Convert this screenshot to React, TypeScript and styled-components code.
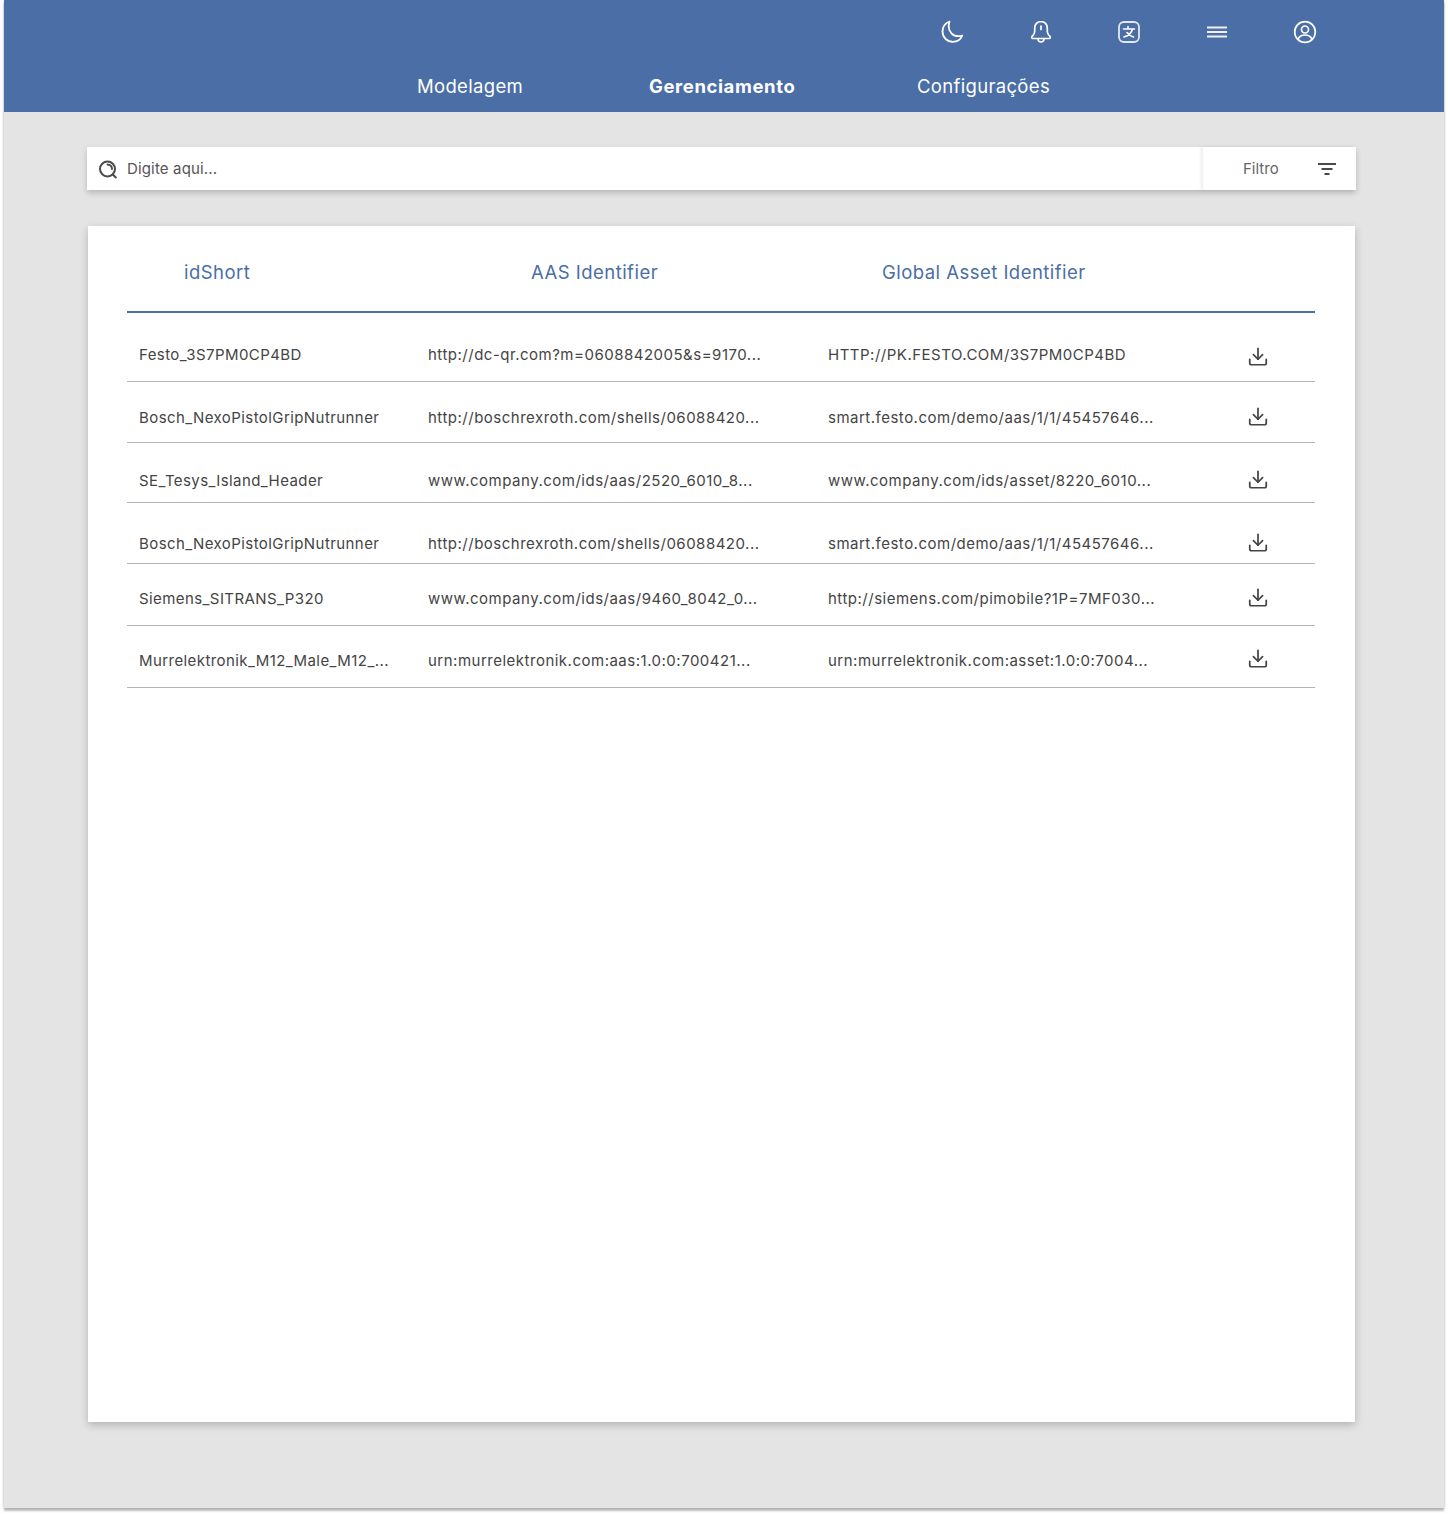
import React from "react";
import styled, { createGlobalStyle } from "styled-components";
import { Download } from "lucide-react";

const BLUE = "#4a6ea5";
const FONT = `Inter, "Noto Sans", sans-serif`;

const GlobalStyle = createGlobalStyle`
  html, body {
    margin: 0;
    background: #fff;
  }
  body {
    min-height: 1516px;
    font-family: ${FONT};
  }
`;

const Frame = styled.div`
  width: 1440px;
  height: 1508px;
  margin-left: 4px;
  background: #e4e4e4;
  box-shadow: 0 3px 2px rgba(0, 0, 0, 0.25), 0 0 3px rgba(0, 0, 0, 0.18);
  display: flex;
  flex-direction: column;
`;

const Header = styled.header`
  height: 112px;
  flex: none;
  background: ${BLUE};
  display: flex;
  flex-direction: column;
`;

const IconBar = styled.div`
  display: flex;
  gap: 64px;
  padding: 20px 0 0 937px;
  color: #fff;
`;

const IconSlot = styled.span`
  width: 24px;
  height: 24px;
  display: flex;
  align-items: center;
  justify-content: center;
`;

const Nav = styled.nav`
  display: flex;
  padding: 29px 0 0 413px;
`;

const NavItem = styled.a<{ $active?: boolean; $width: number }>`
  width: ${(p) => p.$width}px;
  color: #fff;
  font-size: 18.5px;
  line-height: 26px;
  letter-spacing: ${(p) => (p.$active ? 0.6 : 0.33)}px;
  font-weight: ${(p) => (p.$active ? 700 : 400)};
`;

const Content = styled.main`
  display: flex;
  flex-direction: column;
  padding: 35px 88px 0 83px;
`;

const SearchBar = styled.div`
  height: 43px;
  background: #fff;
  box-shadow: 0 3px 6px rgba(0, 0, 0, 0.2);
  display: flex;
  align-items: center;
`;

const SearchField = styled.div`
  flex: 1;
  height: 100%;
  display: flex;
  align-items: center;
  gap: 9px;
  padding-left: 11px;
  box-sizing: border-box;
  font-size: 15px;
  letter-spacing: 0.15px;
  color: #555;
`;

const FieldIcon = styled.span`
  display: flex;
  margin-top: 1px;
`;

const FilterBox = styled.div`
  width: 153px;
  height: 100%;
  display: flex;
  align-items: center;
  padding-left: 40px;
  box-sizing: border-box;
  gap: 38px;
  font-size: 15px;
  color: #666;
  box-shadow: -2px 0 3px rgba(0, 0, 0, 0.08);
`;

const Card = styled.section`
  height: 1196px;
  margin: 36px 1px 0;
  background: #fff;
  box-shadow: 0 3px 8px rgba(0, 0, 0, 0.22);
  padding: 0 40px 0 39px;
  box-sizing: border-box;
`;

const HeadRow = styled.div`
  height: 87px;
  display: flex;
  align-items: center;
  padding-top: 7px;
  box-sizing: border-box;
  border-bottom: 2px solid ${BLUE};
  color: ${BLUE};
  font-size: 18.5px;
  letter-spacing: 0.47px;
`;

const HeadCell = styled.div<{ $width: number; $indent: number }>`
  width: ${(p) => p.$width}px;
  padding-left: ${(p) => p.$indent}px;
  box-sizing: border-box;
`;

const Row = styled.div<{ $height: number; $top: number }>`
  height: ${(p) => p.$height}px;
  box-sizing: border-box;
  padding: ${(p) => p.$top}px 0 0 12px;
  border-bottom: 1px solid #b3b3b3;
  display: grid;
  grid-template-columns: 289px 400px 419px 22px;
  align-items: start;
  color: #444;
  font-size: 15px;
  line-height: 20px;
`;

const IdCell = styled.span`
  letter-spacing: 0.42px;
`;

const UrlCell = styled.span`
  letter-spacing: 0.5px;
`;

const DownloadButton = styled.span<{ $shift: number }>`
  display: flex;
  color: #444;
  margin-top: ${(p) => p.$shift}px;
`;

const SearchIcon = () => (
  <svg width="20" height="20" viewBox="0 0 20 20" fill="none" stroke="#4a4a4a" strokeWidth="2">
    <circle cx="9.500" cy="10" r="7.500" />
    <path d="M9.500 5.500a4.500 4.500 0 0 1 4.500 4.500M14.800 15.500l3 3" strokeLinecap="round" />
  </svg>
);

const FilterIcon = () => (
  <svg width="20" height="14" viewBox="0 0 20 14" fill="none" stroke="#4a4a4a" strokeWidth="2">
    <path d="M1 2h18M4.500 7h11M7.500 12h5" />
  </svg>
);

const MoonIcon = () => (
  <svg width="24" height="24" viewBox="0 0 24 24" fill="none" stroke="currentColor" strokeWidth="1.800" strokeLinejoin="round">
    <path d="M8.500 1.500C4 3.300 1.500 7.200 1.500 11.500c0 5.800 4.700 10.300 10.300 10.300 4.200 0 8-2.500 9.500-6.300-1.200.5-2.500.7-3.800.7-5.700 0-9.800-4.500-9.800-10 0-1.600.3-3.200.8-4.700z" />
  </svg>
);

const BellIcon = () => (
  <svg width="24" height="24" viewBox="0 0 24 24" fill="none" stroke="currentColor" strokeWidth="1.700" strokeLinecap="round" strokeLinejoin="round">
    <path d="M12 1.500c-3.800 0-6.300 3-6.300 6.500v3.500c0 2-1 3.500-2.700 5-.7.700-.3 2 .8 2h16.400c1.100 0 1.500-1.300.8-2-1.700-1.500-2.700-3-2.700-5V8c0-3.500-2.500-6.500-6.300-6.500z" />
    <path d="M9 19c.2 1.900 1.400 3 3 3s2.800-1.100 3-3M12 6v3.500" />
  </svg>
);

const TranslateIcon = () => (
  <svg width="24" height="24" viewBox="0 0 24 24" fill="none" stroke="currentColor" strokeWidth="1.600" strokeLinecap="round" strokeLinejoin="round">
    <rect x="2" y="2" width="20" height="20" rx="5" stroke="#e4e8f0" strokeWidth="1.800" />
    <path d="M6.500 9h11M11 6.500V9M15.500 9c-.8 3.500-3.500 6.500-8.500 8M10 12.500c1.500 2 3.500 3.500 6.500 4.500" />
  </svg>
);

const MenuIcon = () => (
  <svg width="24" height="24" viewBox="0 0 24 24" fill="none" stroke="#eef0f5" strokeWidth="1.800">
    <path d="M2 7.500h20M2 12h20M2 16.500h20" />
  </svg>
);

const UserIcon = () => (
  <svg width="24" height="24" viewBox="0 0 24 24" fill="none" stroke="currentColor" strokeWidth="1.700">
    <circle cx="12" cy="12" r="10.300" />
    <circle cx="12" cy="9.500" r="3.500" />
    <path d="M5 19.500c1-3 3.500-4.500 7-4.500s6 1.500 7 4.500" />
  </svg>
);

const rows = [
  { id: "Festo_3S7PM0CP4BD", aas: "http://dc-qr.com?m=0608842005&s=9170...", asset: "HTTP://PK.FESTO.COM/3S7PM0CP4BD", height: 69, top: 32, shift: -1 },
  { id: "Bosch_NexoPistolGripNutrunner", aas: "http://boschrexroth.com/shells/06088420...", asset: "smart.festo.com/demo/aas/1/1/45457646...", height: 61, top: 26, shift: -4 },
  { id: "SE_Tesys_Island_Header", aas: "www.company.com/ids/aas/2520_6010_8...", asset: "www.company.com/ids/asset/8220_6010...", height: 60, top: 28, shift: -4 },
  { id: "Bosch_NexoPistolGripNutrunner", aas: "http://boschrexroth.com/shells/06088420...", asset: "smart.festo.com/demo/aas/1/1/45457646...", height: 61, top: 31, shift: -4 },
  { id: "Siemens_SITRANS_P320", aas: "www.company.com/ids/aas/9460_8042_0...", asset: "http://siemens.com/pimobile?1P=7MF030...", height: 62, top: 25, shift: -4 },
  { id: "Murrelektronik_M12_Male_M12_...", aas: "urn:murrelektronik.com:aas:1.0:0:700421...", asset: "urn:murrelektronik.com:asset:1.0:0:7004...", height: 62, top: 25, shift: -5 },
];

export default function App() {
  return (
    <Frame>
      <GlobalStyle />
      <Header>
        <IconBar>
          <IconSlot><MoonIcon /></IconSlot>
          <IconSlot><BellIcon /></IconSlot>
          <IconSlot><TranslateIcon /></IconSlot>
          <IconSlot><MenuIcon /></IconSlot>
          <IconSlot><UserIcon /></IconSlot>
        </IconBar>
        <Nav>
          <NavItem $width={232}>Modelagem</NavItem>
          <NavItem $width={268} $active>Gerenciamento</NavItem>
          <NavItem $width={140}>Configurações</NavItem>
        </Nav>
      </Header>
      <Content>
        <SearchBar>
          <SearchField>
            <FieldIcon><SearchIcon /></FieldIcon>
            Digite aqui...
          </SearchField>
          <FilterBox>
            Filtro
            <FilterIcon />
          </FilterBox>
        </SearchBar>
        <Card>
          <HeadRow>
            <HeadCell $width={355} $indent={57}>idShort</HeadCell>
            <HeadCell $width={400} $indent={49}>AAS Identifier</HeadCell>
            <HeadCell $width={400} $indent={0}>Global Asset Identifier</HeadCell>
          </HeadRow>
          {rows.map((row, i) => (
            <Row key={i} $height={row.height} $top={row.top}>
              <IdCell>{row.id}</IdCell>
              <UrlCell>{row.aas}</UrlCell>
              <UrlCell>{row.asset}</UrlCell>
              <DownloadButton $shift={row.shift}><Download size={25} strokeWidth={1.9} /></DownloadButton>
            </Row>
          ))}
        </Card>
      </Content>
    </Frame>
  );
}
